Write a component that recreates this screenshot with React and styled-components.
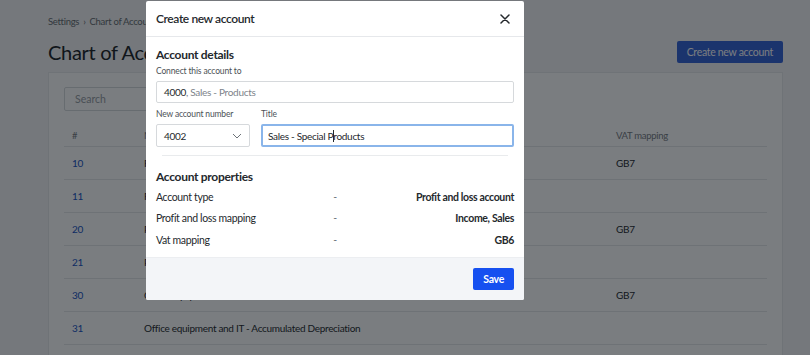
import React from 'react';
import styled, { createGlobalStyle } from 'styled-components';

const GlobalStyle = createGlobalStyle`
  html, body {
    margin: 0;
    padding: 0;
    background: #f4f5f6;
    font-family: Lato, "Open Sans", sans-serif;
    color: #2b2f33;
    overflow: hidden;
  }
  * { box-sizing: border-box; }
`;

const Page = styled.div`
  width: 810px;
  height: 355px;
  padding: 16px 27px 0 48px;
  position: relative;
  overflow: hidden;
`;

const Breadcrumb = styled.div`
  font-size: 9.5px;
  letter-spacing: -0.3px;
  line-height: 12px;
  color: #6b7075;
  display: flex;
  gap: 4px;
`;

const HeadRow = styled.div`
  display: flex;
  justify-content: space-between;
  align-items: center;
  margin-top: 12px;
  margin-bottom: 8px;
`;

const PageTitle = styled.h1`
  margin: 0;
  font-size: 20px;
  letter-spacing: -0.3px;
  font-weight: 400;
  color: #25292d;
`;

const PrimaryButton = styled.button`
  border: none;
  border-radius: 2px;
  background: ${p => (p.$dim ? '#3a66d8' : '#1650f0')};
  color: #fff;
  font-family: inherit;
  font-size: 10.5px;
  letter-spacing: -0.3px;
  font-weight: ${p => (p.$dim ? 400 : 700)};
  height: 22px;
  padding: 0 10px;
  cursor: pointer;
`;

const Card = styled.div`
  background: #ffffff;
  border: 1px solid #e8eaec;
  padding: 14px 15px 0 15px;
  height: 300px;
`;

const SearchBox = styled.div`
  width: 260px;
  height: 24px;
  border: 1px solid #d8dbde;
  border-radius: 2px;
  font-size: 10.5px;
  color: #9aa0a6;
  padding: 0 10px;
  display: flex;
  align-items: center;
`;

const Table = styled.div`
  margin-top: 14px;
  display: grid;
  grid-template-columns: 80px 472px 1fr;
  font-size: 10px;
  letter-spacing: -0.3px;
`;

const HeadCell = styled.div`
  color: #7a8086;
  font-size: 9.5px;
  height: 22px;
  display: flex;
  align-items: center;
  padding-left: ${p => (p.$first ? '8px' : '0')};
  border-bottom: 1px solid #e7e9eb;
`;

const Cell = styled.div`
  height: 33px;
  display: flex;
  align-items: center;
  padding-left: ${p => (p.$first ? '8px' : '0')};
  border-bottom: 1px solid #e7e9eb;
  color: ${p => (p.$link ? '#2457c5' : '#2b2f33')};
`;

const Backdrop = styled.div`
  position: absolute;
  inset: 0;
  background: rgba(0, 5, 11, 0.52);
`;

const Modal = styled.div`
  position: absolute;
  left: 146px;
  top: 1px;
  width: 378px;
  background: #fff;
  border-radius: 2px;
  overflow: hidden;
  display: flex;
  flex-direction: column;
`;

const ModalHeader = styled.div`
  height: 36px;
  padding: 0 10px;
  display: flex;
  align-items: center;
  justify-content: space-between;
  border-bottom: 1px solid #e6e8eb;
`;

const ModalTitle = styled.div`
  font-size: 12px;
  font-weight: 600;
  letter-spacing: -0.4px;
  color: #24282c;
`;

const CloseButton = styled.button`
  border: none;
  background: none;
  padding: 0;
  width: 16px;
  height: 16px;
  display: flex;
  align-items: center;
  justify-content: center;
  margin-right: 1px;
  cursor: pointer;
`;

const ModalBody = styled.div`
  padding: 10px 10px 6px;
`;

const SectionTitle = styled.h2`
  margin: 0 0 ${p => (p.$tight ? '1px' : '3px')};
  font-size: 12px;
  line-height: 16px;
  font-weight: 700;
  letter-spacing: -0.3px;
  color: #24282c;
`;

const FieldLabel = styled.div`
  font-size: 8.5px;
  line-height: 11px;
  letter-spacing: -0.15px;
  color: #4c5156;
  margin-bottom: 4px;
`;

const TextField = styled.div`
  height: ${p => (p.$focus || p.$select ? '23px' : '22px')};
  border: ${p => (p.$focus ? '2px solid #8ab5ea' : '1px solid #d6d9dc')};
  border-radius: 2px;
  display: flex;
  align-items: center;
  justify-content: space-between;
  padding: 0 ${p => (p.$focus ? '5px' : '7px')};
  font-size: 10px;
  letter-spacing: -0.3px;
  color: #25292d;
`;

const Muted = styled.span`
  color: #7d838a;
`;

const Caret = styled.span`
  display: inline-block;
  width: 1px;
  height: 12px;
  background: #25292d;
  vertical-align: -2px;
  margin: 0 -1px 0 0;
`;

const FieldRow = styled.div`
  display: grid;
  grid-template-columns: 94px 1fr;
  gap: 11px;
  margin-top: 6px;
`;

const Divider = styled.div`
  height: 1px;
  background: #e9ebed;
  margin: 8px 6px 13px;
`;

const PropGrid = styled.div`
  display: grid;
  grid-template-columns: 1fr auto 1fr;
  font-size: 10.5px;
  letter-spacing: -0.35px;
`;

const PropCell = styled.div`
  height: 21.5px;
  display: flex;
  align-items: center;
  justify-content: ${p => (p.$align === 'right' ? 'flex-end' : p.$align === 'center' ? 'center' : 'flex-start')};
  font-weight: ${p => (p.$bold ? 700 : 400)};
  color: ${p => (p.$muted ? '#6f757b' : '#25292d')};
`;

const ModalFooter = styled.div`
  background: #f3f5f8;
  border-top: 1px solid #eceef1;
  height: 43px;
  padding: 0 10px;
  display: flex;
  align-items: center;
  justify-content: flex-end;
`;

const rows = [
  ['10', 'Freehold property - Cost', 'GB7'],
  ['11', 'Freehold property - Accumulated Depreciation', ''],
  ['20', 'Plant and machinery - Cost', 'GB7'],
  ['21', 'Plant and machinery - Accumulated Depreciation', ''],
  ['30', 'Office equipment and IT - Cost', 'GB7'],
  ['31', 'Office equipment and IT - Accumulated Depreciation', ''],
  ['40', 'Fixtures and fittings - Cost', 'GB7'],
];

const properties = [
  ['Account type', 'Profit and loss account'],
  ['Profit and loss mapping', 'Income, Sales'],
  ['Vat mapping', 'GB6'],
];

const ChevronDown = () => (
  <svg width="10" height="6" viewBox="0 0 10 6" fill="none">
    <path d="M1 1l4 4 4-4" stroke="#6d7378" strokeWidth="1" />
  </svg>
);

const CloseIcon = () => (
  <svg width="10" height="10" viewBox="0 0 10 10">
    <path d="M1 1l8 8M9 1l-8 8" stroke="#25292d" strokeWidth="1.5" strokeLinecap="round" />
  </svg>
);

export default function App() {
  return (
    <>
      <GlobalStyle />
      <Page>
        <Breadcrumb>
          <span>Settings</span>
          <span>›</span>
          <span>Chart of Accounts</span>
        </Breadcrumb>
        <HeadRow>
          <PageTitle>Chart of Accounts</PageTitle>
          <PrimaryButton $dim>Create new account</PrimaryButton>
        </HeadRow>
        <Card>
          <SearchBox>Search</SearchBox>
          <Table>
            <HeadCell $first>#</HeadCell>
            <HeadCell>Name</HeadCell>
            <HeadCell>VAT mapping</HeadCell>
            {rows.map(([num, name, vat]) => (
              <React.Fragment key={num}>
                <Cell $first $link>{num}</Cell>
                <Cell>{name}</Cell>
                <Cell>{vat}</Cell>
              </React.Fragment>
            ))}
          </Table>
        </Card>

        <Backdrop />

        <Modal>
          <ModalHeader>
            <ModalTitle>Create new account</ModalTitle>
            <CloseButton aria-label="Close">
              <CloseIcon />
            </CloseButton>
          </ModalHeader>
          <ModalBody>
            <SectionTitle>Account details</SectionTitle>
            <FieldLabel>Connect this account to</FieldLabel>
            <TextField>
              <span>
                4000<Muted>, Sales - Products</Muted>
              </span>
            </TextField>
            <FieldRow>
              <div>
                <FieldLabel>New account number</FieldLabel>
                <TextField $select>
                  <span>4002</span>
                  <ChevronDown />
                </TextField>
              </div>
              <div>
                <FieldLabel>Title</FieldLabel>
                <TextField $focus>
                  <span>
                    Sales - Special P<Caret />roducts
                  </span>
                </TextField>
              </div>
            </FieldRow>
            <Divider />
            <SectionTitle $tight>Account properties</SectionTitle>
            <PropGrid>
              {properties.map(([label, value]) => (
                <React.Fragment key={label}>
                  <PropCell>{label}</PropCell>
                  <PropCell $align="center" $muted>-</PropCell>
                  <PropCell $align="right" $bold>{value}</PropCell>
                </React.Fragment>
              ))}
            </PropGrid>
          </ModalBody>
          <ModalFooter>
            <PrimaryButton>Save</PrimaryButton>
          </ModalFooter>
        </Modal>
      </Page>
    </>
  );
}
